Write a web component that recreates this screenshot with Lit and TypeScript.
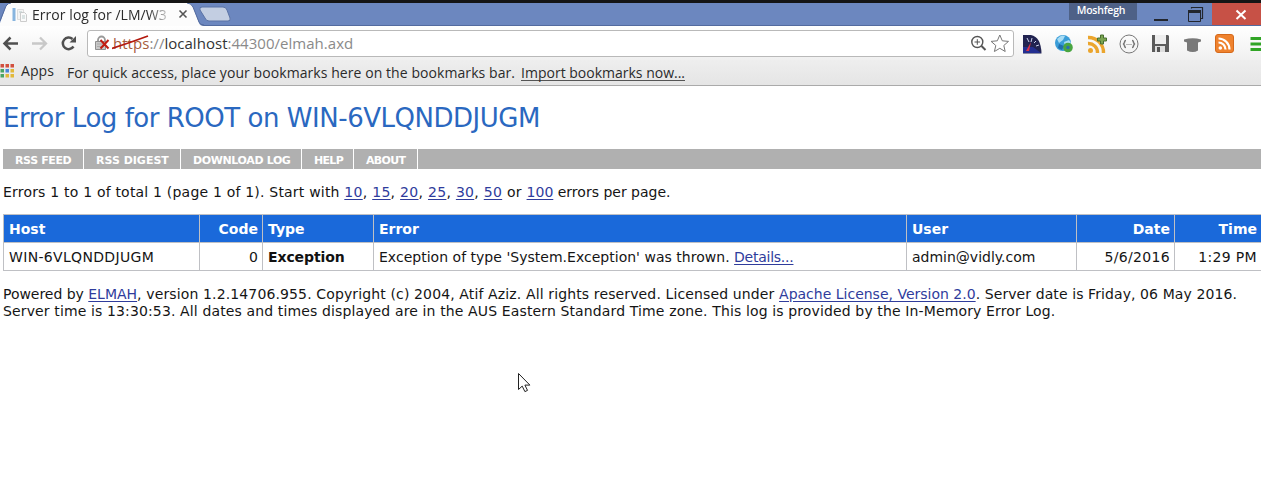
import { LitElement, html, css, svg } from "lit";
import { customElement } from "lit/decorators.js";

@customElement("browser-chrome")
class BrowserChrome extends LitElement {
  static styles = css`
    :host { display: block; height: 86px; font-family: "Open Sans", "Noto Sans", sans-serif; color: #2b2b2b; }
    svg { display: block; flex: none; }
    .edge { height: 3px; background: #151515; }
    .titlebar { height: 23px; display: flex; background: #6c87bf; position: relative; box-sizing: border-box; border-bottom: 1px solid #536b9f; }
    .shape { position: absolute; left: 0; top: 0; }
    .tab { position: relative; width: 190px; height: 23px; display: flex; align-items: center; padding-left: 12px; box-sizing: border-box; }
    .title { width: 142px; margin-left: 4px; font-size: 14px; letter-spacing: 0.05px; line-height: 20px; white-space: nowrap; -webkit-mask-image: linear-gradient(90deg, #000 116px, transparent 141px); }
    .close { margin-left: 4px; margin-top: -1px; }
    .space { flex: 1; }
    .user { width: 68px; height: 17px; margin-right: 14px; padding-right: 4px; box-sizing: border-box; background: #4e6187; color: #fff; font-size: 10.5px; font-weight: 600; line-height: 15px; text-align: center; letter-spacing: -.2px; }
    .win { display: flex; }
    .red { width: 49px; height: 22px; background: #c75146; display: flex; align-items: center; justify-content: center; }
    .x { margin-left: 8px; margin-top: 1px; }
    .toolbar { height: 34px; background: linear-gradient(#fff, #f0f0f0); display: flex; align-items: center; padding-left: 2px; }
    .url { width: 928px; height: 27px; margin-left: 9px; box-sizing: border-box; border: 1px solid #b9b9b9; border-radius: 3px; background: #fff; display: flex; align-items: center; padding-left: 7px; padding-right: 3px; }
    .address { font-size: 15px; color: #8a8a8a; margin-left: 3px; white-space: nowrap; position: relative; letter-spacing: .03px; }
    .address b { font-weight: 400; color: #333; }
    .scheme { color: #a65c3c; }
    .slash { position: absolute; left: -1px; top: 0; }
    .ext { display: flex; margin-left: 8px; margin-top: 2px; gap: 12.200px; width: 239px; overflow: hidden; }
    .bookmarks { height: 26px; box-sizing: border-box; background: linear-gradient(#eee, #e5e5e5); border-bottom: 1px solid #aaa; display: flex; align-items: center; font-size: 14px; white-space: nowrap; }
    .grid { margin-top: -4px; }
    .apps { margin-left: 7px; margin-top: -4px; letter-spacing: .1px; }
    .hint { margin-left: 13px; letter-spacing: .07px; }
    .import { margin-left: 6px; border-bottom: 1px solid #555; line-height: 15px; }
  `;
  render() {
    const apps = ["#d2503f", "#d2503f", "#d2503f", "#4aa564", "#4b88d9", "#e2b93b", "#4aa564", "#e2b93b", "#e2b93b"];
    return html`
      <div class="edge"></div>
      <div class="titlebar">
        <svg class="shape" width="236" height="23"><path d="M0 20L6 3Q8 0 11 0H187Q191 0 193 4L199 20Q200 23 204 23H0Z" fill="#fcfcfc"/><path d="M0 18L6 3Q8 0 11 0" fill="none" stroke="#536b9f"/><path d="M187 0Q191 0 193 4L199 19Q200 22 204 22" fill="none" stroke="#536b9f"/><path d="M202 4H223Q226 4 227 7L230 15Q231 18 228 18H209Q206 18 205 15L200 7Q199 4 202 4Z" fill="#c3cee2" stroke="#5a72a5"/></svg>
        <div class="tab">
          <svg width="16" height="16"><path d="M.5 1h3v13h-3z" fill="#88b5df"/><path d="M5.500 2.500h6v10h-6z" fill="#f4f4f4" stroke="#ddd"/><path d="M8.500 5.500h4l2 2v7h-6z" fill="#fafafa" stroke="#ccc"/><path d="M7 5h3M10 9h3M10 11h3" stroke="#bcc"/></svg>
          <span class="title">Error log for /LM/W3</span>
          <svg class="close" width="10" height="10"><path d="M1.500 1.500l7 7m0-7l-7 7" stroke="#555" stroke-width="1.600"/></svg>
        </div>
        <div class="space"></div>
        <div class="user">Moshfegh</div>
        <div class="win">
          <svg width="61" height="22"><path d="M3 17h14" stroke="#22262e" stroke-width="2"/><path d="M40.500 5.500v-1h11v11h-2" fill="none" stroke="#22262e" stroke-width="1.200"/><path d="M37.500 7.500h12v11h-12z" fill="none" stroke="#22262e"/><path d="M37 8.500h13" stroke="#22262e" stroke-width="3"/></svg>
          <div class="red"><svg class="x" width="12" height="12"><path d="M1.500 1.500l9 8.500m0-8.500L1.500 10" stroke="#fff" stroke-width="2"/></svg></div>
        </div>
      </div>
      <div class="toolbar">
        <svg width="76" height="20" fill="none"><path d="M16 10.500H3M8.500 4.500L2.500 10.500l6 6" stroke="#505050" stroke-width="2.500"/><path d="M30 10.500h13M38 4.500l6 6-6 6" stroke="#c8c8c8" stroke-width="2.300"/><path d="M71.500 13.500A5.800 5.800 0 1 1 70.500 6" stroke="#505050" stroke-width="2.500"/><path d="M74 3v6.500h-6.500z" fill="#505050"/></svg>
        <div class="url">
          <svg width="15" height="16"><path d="M3 7V5a3.500 3.500 0 0 1 7 0v2" fill="none" stroke="#999" stroke-width="1.800"/><path d="M.5 6.500h10v8H.5z" fill="#c8c8c8" stroke="#8f8f8f"/><path d="M2 9h7M2 11.500h7" stroke="#aaa"/><path d="M5.500 5l8 8.500M13.500 5l-8 8.500" stroke="#c11d11" stroke-width="2"/></svg>
          <div class="address"><span class="scheme">https</span>://<b>localhost</b>:44300/elmah.axd<svg class="slash" width="38" height="21"><path d="M0 15.500Q17 10 36 3" fill="none" stroke="#b3190e" stroke-width="1.800"/></svg></div>
          <div class="space"></div>
          <svg width="40" height="20" fill="none" stroke="#555"><circle cx="7.300" cy="9" r="5.500" stroke-width="1.400"/><path d="M11.500 13l4 4" stroke-width="2"/><path d="M4.500 9h5.600M7.300 6.200v5.600"/><path d="M29.800 2l2.500 5.800 6.200.6-4.700 4.100 1.400 6-5.400-3.200-5.400 3.200 1.400-6-4.700-4.100 6.200-.6z" stroke="#777"/></svg>
        </div>
        <div class="ext">
          <svg width="20" height="20"><path d="M1 1h8q10 2 10.500 18.500H1z" fill="#222451"/><path d="M1 13h10l8 6H1z" fill="#242f91"/><path d="M5 4l2 4M10 4l-1 4M14 7l-2 2M17 11l-3 1" stroke="#cfd4ef"/><path d="M4 17L9 8l-2 9z" fill="#dc3348"/></svg>
          <svg width="20" height="20"><circle cx="9" cy="9" r="8" fill="#3a9dd8"/><path d="M3 5q4-5 8-3l-2 4-4 3zM10 8l5-2 2 3-3 5-3-1z" fill="#a8dcf4"/><path d="M5 10l5 2-2 4-4-2z" fill="#206fad"/><circle cx="14" cy="13.500" r="3.300" fill="#2c6fb0" stroke="#49a541" stroke-width="3"/></svg>
          <svg width="20" height="20" fill="none" stroke="#eba52d" stroke-width="3.400"><circle cx="3.500" cy="16.500" r="2.500" fill="#eba52d" stroke="none"/><path d="M1 9.500a9 9 0 0 1 9.500 9.500M1 3.500a15 15 0 0 1 15.500 15.500"/><path d="M13.500 1h3v3h3v3h-3v3h-3V7h-3V4h3z" fill="#7ba653" stroke="#496f31" stroke-width="1"/></svg>
          <svg width="20" height="20" fill="none" stroke="#777"><circle cx="10" cy="10" r="9"/><path d="M7 6.500q-1.500 0-1.500 2L4.500 10l1 1.500q0 2 1.500 2M13 6.500q1.500 0 1.500 2l1 1.500-1 1.500q0 2-1.500 2" stroke-width="1.400"/><path d="M7.500 10.500h5" stroke-dasharray="1 1"/></svg>
          <svg width="20" height="20"><path d="M2 1h15l1 1v16H1V1z" fill="#5b5b5b"/><path d="M4 1h11v9H4z" fill="#eee"/><path d="M4 12h10v6H4z" fill="#ddd"/><path d="M6 13h3v5H6z" fill="#555"/></svg>
          <svg width="20" height="20"><path d="M1 5.500q9-2.500 17 0v2l-3 1v8q-5 3-11 0v-8L1 7.500z" fill="#797979"/></svg>
          <svg width="20" height="20"><rect x=".5" y=".5" width="18" height="18" rx="2.500" fill="#ef822e" stroke="#d5691b"/><circle cx="5.300" cy="14" r="1.800" fill="#fff"/><path d="M3.500 8.500a7 7 0 0 1 7 7M3.500 4.500a11 11 0 0 1 11 11" fill="none" stroke="#fff" stroke-width="2.200"/></svg>
          <svg width="20" height="20"><path d="M2.500 4.500h17.500M2.500 10h17.500M2.500 15.500h17.500" stroke="#31a526" stroke-width="3"/></svg>
        </div>
      </div>
      <div class="bookmarks">
        <svg class="grid" width="14" height="14">${apps.map((c, i) => svg`<rect x=${(i % 3) * 5 + 0.5} y=${Math.floor(i / 3) * 5} width="3.500" height="3.500" fill=${c}/>`)}</svg>
        <span class="apps">Apps</span><span class="hint">For quick access, place your bookmarks here on the bookmarks bar.</span><span class="import">Import bookmarks now...</span>
      </div>`;
  }
}

@customElement("error-log")
class ErrorLog extends LitElement {
  static styles = css`
    :host { display: block; padding-left: 3px; font: 14px/17px Verdana, "DejaVu Sans", sans-serif; color: #151515; white-space: nowrap; }
    h1 { margin: 0; padding-top: 16px; height: 47px; font-size: 26px; line-height: 32px; font-weight: 400; color: #2a68c0; letter-spacing: -.47px; }
    .menu { display: flex; height: 20px; background: #b0b0b0; }
    .menu span { box-sizing: border-box; border-right: 1px solid #fff; padding-left: 12px; color: #fff; font-size: 11px; line-height: 23px; font-weight: 700; }
    .menu .tight { letter-spacing: -.37px; }
    .menu .tighter { letter-spacing: -.7px; }
    a { color: #2f3c9c; text-decoration: underline; text-underline-offset: 2px; }
    .pages { padding-top: 15px; height: 30px; }
    .lead { letter-spacing: .2px; }
    .sizes { letter-spacing: .29px; }
    .table { display: grid; grid-template-columns: 196px 63px 111px 533px 170px 98px 89px; width: 1260px; border-left: 1px solid #bfc0c4; border-top: 1px solid #bfc0c4; }
    .cell { box-sizing: border-box; height: 28px; padding: 0 5px; line-height: 28px; border-right: 1px solid #bfc0c4; border-bottom: 1px solid #bfc0c4; }
    .cell.right { padding-right: 4px; }
    .cell.right:nth-child(7n) { padding-right: 6px; }
    .head { background: #1a69da; color: #fff; font-weight: 700; }
    .right { text-align: right; }
    .wide { letter-spacing: .33px; }
    .message { letter-spacing: .02px; }
    .bold { font-weight: 700; color: #111; letter-spacing: -.1px; }
    .details { letter-spacing: -.25px; }
    .foot { padding-top: 15px; letter-spacing: .13px; }
    .foot a { letter-spacing: 0; }
    .by { letter-spacing: -.03px; }
    .date { letter-spacing: .09px; }
  `;
  render() {
    const sizes = ["10", "15", "20", "25", "30", "50"];
    const menu: [string, number, string][] = [["RSS FEED", 81, "tight"], ["RSS DIGEST", 97, ""], ["DOWNLOAD LOG", 121, "tight"], ["HELP", 52, "tighter"], ["ABOUT", 64, "tighter"]];
    const cols = ["Host", "Code", "Type", "Error", "User", "Date", "Time"];
    const right = new Set([1, 5, 6]);
    const wide = new Set([0, 5, 6]);
    const row = ["WIN-6VLQNDDJUGM", "0", "Exception", html`<span class="message">Exception of type 'System.Exception' was thrown. </span><a class="details">Details...</a>`, "admin@vidly.com", "5/6/2016", "1:29 PM"];
    return html`
      <h1>Error Log for ROOT on WIN-6VLQNDDJUGM</h1>
      <div class="menu">${menu.map(([t, w, c]) => html`<span class=${c} style="width:${w}px">${t}</span>`)}</div>
      <div class="pages"><span class="lead">Errors 1 to 1 of total 1 (page 1 of 1). Start with </span><span class="sizes">${sizes.map((s, i) => html`<a>${s}</a>${i < 5 ? ", " : " or "}`)}</span><a>100</a> errors per page.</div>
      <div class="table">
        ${cols.map((c, i) => html`<div class="cell head ${right.has(i) ? "right" : ""}">${c}</div>`)}
        ${row.map((c, i) => html`<div class="cell ${right.has(i) ? "right" : ""} ${i === 2 ? "bold" : ""} ${wide.has(i) ? "wide" : ""}">${c}</div>`)}
      </div>
      <div class="foot"><div><span class="by">Powered by </span><a>ELMAH</a>, version 1.2.14706.955. Copyright (c) 2004, Atif Aziz. All rights reserved. Licensed under <a>Apache License, Version 2.0</a><span class="date">. Server date is Friday, 06 May 2016.</span></div><div>Server time is 13:30:53. All dates and times displayed are in the AUS Eastern Standard Time zone. This log is provided by the In-Memory Error Log.</div></div>`;
  }
}

@customElement("app-root")
class AppRoot extends LitElement {
  static styles = css`
    :host { display: block; position: relative; width: 1261px; height: 492px; background: #fff; overflow: hidden; }
    .cursor { position: absolute; left: 518px; top: 373px; }
  `;
  render() {
    return html`<browser-chrome></browser-chrome><error-log></error-log>
      <svg class="cursor" width="13" height="20"><path d="M.5.500v16l3.700-3.400 2.700 5.500 2.600-1.200-2.600-5.300h5z" fill="#fff" stroke="#222"/></svg>`;
  }
}
